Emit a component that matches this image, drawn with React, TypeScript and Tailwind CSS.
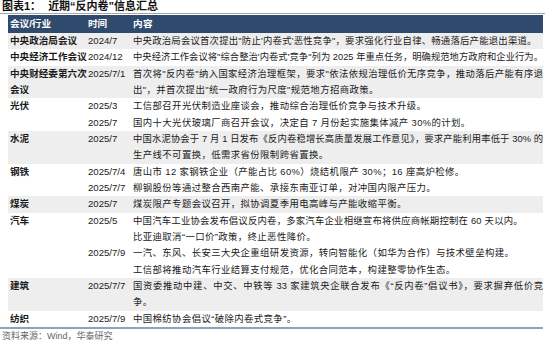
type Line = { name?: string; time?: string; text: string; full?: boolean; tight?: boolean }
type Row = { id: string; gray?: boolean; lines: Line[] }

const rows: Row[] = [
  {
    id: "zzj",
    gray: true,
    lines: [
      { name: "中央政治局会议", time: "2024/7", tight: true, text: "中央政治局会议首次提出\"防止'内卷式'恶性竞争\"，要求强化行业自律、畅通落后产能退出渠道。" },
    ],
  },
  {
    id: "jjgz",
    lines: [
      { name: "中央经济工作会议", time: "2024/12", full: true, text: "中央经济工作会议将\"综合整治'内卷式'竞争\"列为 2025 年重点任务，明确规范地方政府和企业行为。" },
    ],
  },
  {
    id: "cjw",
    gray: true,
    lines: [
      { name: "中央财经委第六次", time: "2025/7/1", full: true, text: "首次将\"反内卷\"纳入国家经济治理框架，要求\"依法依规治理低价无序竞争，推动落后产能有序退" },
      { name: "会议", text: "出\"，并首次提出\"统一政府行为尺度\"规范地方招商政策。" },
    ],
  },
  {
    id: "gf",
    lines: [
      { name: "光伏", time: "2025/3", text: "工信部召开光伏制造业座谈会，推动综合治理低价竞争与技术升级。" },
      { time: "2025/7", text: "国内十大光伏玻璃厂商召开会议，决定自 7 月份起实施集体减产 30%的计划。" },
    ],
  },
  {
    id: "sn",
    gray: true,
    lines: [
      { name: "水泥", time: "2025/7", full: true, text: "中国水泥协会于 7 月 1 日发布《反内卷稳增长高质量发展工作意见》，要求产能利用率低于 30% 的" },
      { text: "生产线不可置换，低需求省份限制跨省置换。" },
    ],
  },
  {
    id: "gt",
    lines: [
      { name: "钢铁", time: "2025/7/4", text: "唐山市 12 家钢铁企业（产能占比 60%）烧结机限产 30%；16 座高炉检修。" },
      { time: "2025/7/7", text: "柳钢股份等通过整合西南产能、承接东南亚订单，对冲国内限产压力。" },
    ],
  },
  {
    id: "mt",
    gray: true,
    lines: [{ name: "煤炭", time: "2025/7", text: "煤炭限产专题会议召开，拟协调夏季用电高峰与产能收缩平衡。" }],
  },
  {
    id: "qc",
    lines: [
      { name: "汽车", time: "2025/5", tight: true, text: "中国汽车工业协会发布倡议反内卷，多家汽车企业相继宣布将供应商帐期控制在 60 天以内。" },
      { text: "比亚迪取消“一口价”政策，终止恶性降价。" },
      { time: "2025/7/9", text: "一汽、东风、长安三大央企重组研发资源，转向智能化（如华为合作）与技术壁垒构建。" },
      { text: "工信部将推动汽车行业结算支付规范，优化合同范本，构建整零协作生态。" },
    ],
  },
  {
    id: "jz",
    gray: true,
    lines: [
      { name: "建筑", time: "2025/7/7", full: true, text: "国资委推动中建、中交、中铁等 33 家建筑央企联合发布《“反内卷”倡议书》，要求摒弃低价竞" },
      { text: "争。" },
    ],
  },
  {
    id: "fz",
    lines: [{ name: "纺织", time: "2025/7/9", text: "中国棉纺协会倡议“破除内卷式竞争”。" }],
  },
]

export default function App() {
  return (
    <div className="w-[550px] h-[342px] bg-white overflow-hidden font-['Liberation_Sans','Noto_Sans_CJK_SC',sans-serif] text-[#1a1a1a]">
      <div className="w-[545px] h-[14px] border-b border-[#a6a6a6] pl-[2px] flex items-center text-[11px] font-bold leading-[13px] text-[#111]">
        <span>图表1：</span>
        <span className="ml-[7px]">近期“反内卷”信息汇总</span>
      </div>

      <div className="ml-[8px] w-[535px] mt-[1px]">
        <div className="flex h-[18px] items-center bg-[#2f4a6d] text-white text-[9.6px] font-bold">
          <div className="w-[80px] pl-[2px]">会议/行业</div>
          <div className="w-[45px]">时间</div>
          <div className="tracking-[0.3px]">内容</div>
        </div>

        {rows.map((row) => (
          <div key={row.id} className={`flex flex-col ${row.gray ? "bg-[#eeeeee]" : ""}`}>
            {row.lines.map((l, i) => (
              <div key={i} className="flex h-[16.33px] leading-[16.33px] whitespace-nowrap">
                <div className="w-[80px] shrink-0 pl-[2px] font-bold text-[9.6px]">{l.name}</div>
                <div className="w-[45px] shrink-0 text-[9.6px]">{l.time}</div>
                {l.full ? (
                  <div className="w-[410px] text-[9.3px] text-justify [text-align-last:justify]">{l.text}</div>
                ) : (
                  <div className={`text-[9.4px] ${l.tight ? "tracking-[0.2px]" : "tracking-[0.4px]"}`}>{l.text}</div>
                )}
              </div>
            ))}
          </div>
        ))}
      </div>

      <div className="w-[543px] h-[2px] bg-[#8fa2bd]" />
      <div className="pl-[2px] pt-[2px] text-[9px] leading-[11px] text-[#666]">资料来源：Wind，华泰研究</div>
    </div>
  )
}
